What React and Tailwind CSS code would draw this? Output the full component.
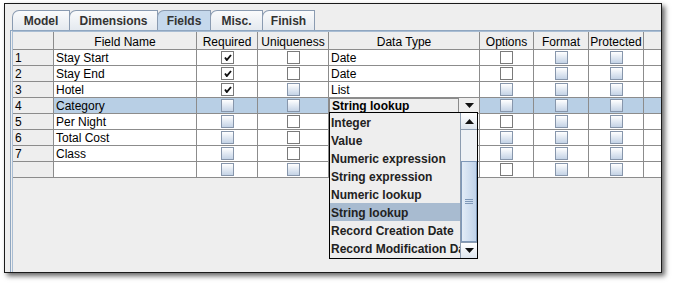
import React from "react";

const COLS = [41, 143, 61, 71, 151, 54, 55, 55, 30];
const HEAD = ["", "Field Name", "Required", "Uniqueness", "Data Type", "Options", "Format", "Protected", ""];

const ROWS = [
  { n: "1", name: "Stay Start", req: "c", uniq: "w", dt: "Date", opt: "w", fmt: "g", prot: "g" },
  { n: "2", name: "Stay End", req: "c", uniq: "w", dt: "Date", opt: "w", fmt: "g", prot: "g" },
  { n: "3", name: "Hotel", req: "c", uniq: "g", dt: "List", opt: "g", fmt: "g", prot: "g" },
  { n: "4", name: "Category", req: "g", uniq: "g", dt: "__combo", opt: "g", fmt: "g", prot: "g", sel: true },
  { n: "5", name: "Per Night", req: "g", uniq: "w", dt: "", opt: "w", fmt: "g", prot: "g" },
  { n: "6", name: "Total Cost", req: "g", uniq: "w", dt: "", opt: "g", fmt: "g", prot: "g" },
  { n: "7", name: "Class", req: "g", uniq: "w", dt: "", opt: "g", fmt: "g", prot: "g" },
  { n: "", name: "", req: "g", uniq: "g", dt: "", opt: "w", fmt: "g", prot: "g" },
];

const ITEMS = [
  "Integer",
  "Value",
  "Numeric expression",
  "String expression",
  "Numeric lookup",
  "String lookup",
  "Record Creation Date",
  "Record Modification Date",
];

function Check({ kind }) {
  if (kind === "c") {
    return (
      <div className="w-[13px] h-[13px] border border-[#7a7a7a] bg-white flex items-end justify-start pl-[2px] pb-[2px]">
        <svg width="8" height="7" viewBox="0 0 8 7">
          <path d="M1 3.5 L2.8 6 L7 1" fill="none" stroke="#111" strokeWidth="1.9" />
        </svg>
      </div>
    );
  }
  if (kind === "w") {
    return <div className="w-[13px] h-[13px] border border-[#7a7a7a] bg-white" />;
  }
  return (
    <div className="w-[13px] h-[13px] border border-[#8796ab] bg-gradient-to-b from-[#ffffff] to-[#c4d3e6]" />
  );
}

function Tab({ label, w, selected }) {
  return (
    <div
      className={
        "h-[20px] flex items-center justify-center border border-b-0 border-[#8a9bb1] rounded-tl-[7px] -mr-px text-[12px] font-bold text-[#333] " +
        (selected ? "bg-[#c5d8ec]" : "bg-gradient-to-b from-[#fafbfc] to-[#e4e9ef]")
      }
      style={{ width: w }}
    >
      {label}
    </div>
  );
}

function Combo() {
  return (
    <div className="flex w-full h-full">
      <div className="flex-1 min-w-0 border border-[#8a8a8a] bg-[#eeeeee] flex items-center pl-[2px] text-[12px] font-bold text-black leading-none overflow-hidden">
        String lookup
      </div>
      <div className="w-[20px] flex items-center justify-center bg-[#eeeeee]">
        <svg width="9" height="5" viewBox="0 0 9 5">
          <path d="M0 0 H9 L4.5 5 Z" fill="#111" />
        </svg>
      </div>
    </div>
  );
}

function Row({ r }) {
  const cells = [r.n, r.name, r.req, r.uniq, r.dt, r.opt, r.fmt, r.prot, ""];
  return (
    <div className="flex h-[16px]">
      {cells.map((c, i) => {
        let bg = r.sel ? "bg-[#b8cfe5]" : "bg-white";
        if (i === 0) bg = "bg-[#eeeeee]";
        const isCheck = [2, 3, 5, 6, 7].includes(i);
        const isCombo = c === "__combo";
        return (
          <div
            key={i}
            className={
              "shrink-0 border-r border-b border-[#8c8c8c] flex items-center text-[12px] leading-none text-black overflow-hidden whitespace-nowrap " +
              bg +
              (isCheck ? " justify-center" : isCombo ? "" : " pl-[2px]")
            }
            style={{ width: COLS[i] }}
          >
            {isCheck ? <Check kind={c} /> : isCombo ? <Combo /> : c}
          </div>
        );
      })}
    </div>
  );
}

export default function App() {
  return (
    <div className="w-[673px] h-[286px] bg-white pt-[3px] pl-[4px] font-['Liberation_Sans',Arial,sans-serif]">
      <div className="w-[658px] h-[270px] border border-[#1a1a1a] bg-[#eeeeee] overflow-hidden shadow-[3px_3px_5px_rgba(0,0,0,0.6)] pl-[5px] pt-[6px]">
        <div className="flex pl-[2px]">
          <Tab label="Model" w={58} />
          <Tab label="Dimensions" w={89} />
          <Tab label="Fields" w={54} selected />
          <Tab label="Misc." w={53} />
          <Tab label="Finish" w={53} />
        </div>
        <div className="h-[260px] border-l border-t border-[#8fa6c0] w-[700px]">
          <div className="h-full ml-px border-l border-t border-[#a9bdd3] relative">
            <div className="flex h-[18px]">
              {HEAD.map((h, i) => (
                <div
                  key={i}
                  className="shrink-0 border-r border-b border-[#8c8c8c] bg-[#eeeeee] flex items-center justify-center pt-[2px] text-[12px] leading-none text-black whitespace-nowrap"
                  style={{ width: COLS[i] }}
                >
                  {h}
                </div>
              ))}
            </div>
            {ROWS.map((r, i) => (
              <Row key={i} r={r} />
            ))}
            <div className="absolute left-[316px] top-[80px] w-[149px] h-[147px] border border-black bg-[#eeeeee] flex">
              <div className="flex-1 min-w-0 flex flex-col overflow-hidden">
                {ITEMS.map((it, i) => (
                  <div
                    key={i}
                    className={
                      "h-[18px] shrink-0 flex items-center pl-[1px] pt-[1px] text-[12px] font-bold text-[#222] whitespace-nowrap overflow-hidden " +
                      (i === 5 ? "bg-[#a8bbd0]" : "")
                    }
                  >
                    {it}
                  </div>
                ))}
              </div>
              <div className="w-[17px] shrink-0 flex flex-col border-l border-[#8c9cb0] bg-[#eef1f5]">
                <div className="h-[17px] shrink-0 border-b border-[#8c9cb0] bg-gradient-to-b from-white to-[#dde5ee] flex items-center justify-center">
                  <svg width="9" height="5" viewBox="0 0 9 5">
                    <path d="M4.5 0 L9 5 H0 Z" fill="#111" />
                  </svg>
                </div>
                <div className="h-[31px] shrink-0" />
                <div className="flex-1 border border-[#7f98b8] bg-gradient-to-r from-[#e3ecf7] to-[#c0d3ea] flex items-center justify-center">
                  <div className="flex flex-col gap-[1px]">
                    <div className="w-[8px] h-px bg-[#7f98b8]" />
                    <div className="w-[8px] h-px bg-[#7f98b8]" />
                    <div className="w-[8px] h-px bg-[#7f98b8]" />
                  </div>
                </div>
                <div className="h-[16px] shrink-0 border-t border-[#8c9cb0] bg-gradient-to-b from-white to-[#dde5ee] flex items-center justify-center">
                  <svg width="9" height="5" viewBox="0 0 9 5">
                    <path d="M0 0 H9 L4.5 5 Z" fill="#111" />
                  </svg>
                </div>
              </div>
            </div>
          </div>
        </div>
      </div>
    </div>
  );
}
